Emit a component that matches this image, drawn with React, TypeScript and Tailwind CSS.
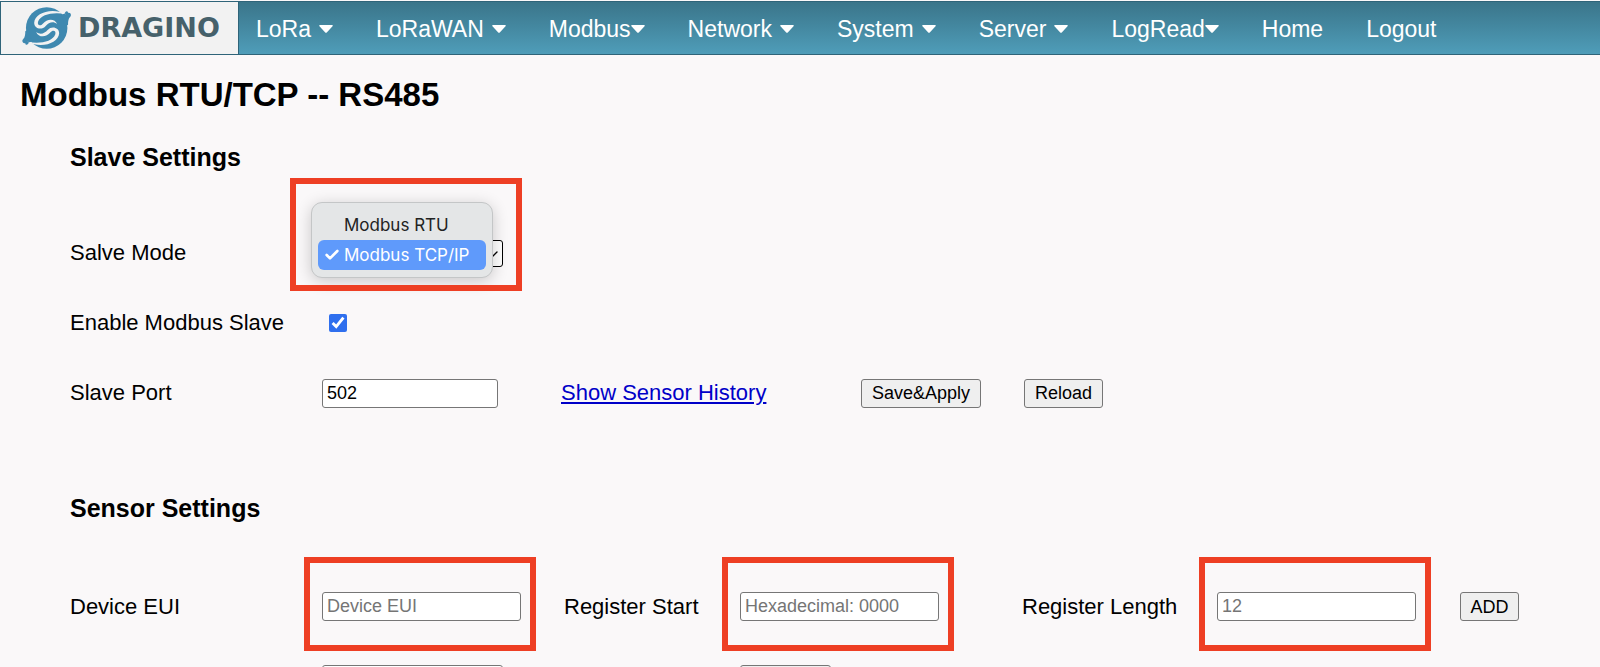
import React from "react";
import { Check, ChevronDown } from "lucide-react";

const menus = [
  { label: "LoRa", caret: "spaced" },
  { label: "LoRaWAN", caret: "spaced" },
  { label: "Modbus", caret: "tight" },
  { label: "Network", caret: "spaced" },
  { label: "System", caret: "spaced" },
  { label: "Server", caret: "spaced" },
  { label: "LogRead", caret: "tight" },
  { label: "Home", caret: "" },
  { label: "Logout", caret: "" },
];

const inputClass =
  "h-[29px] rounded-[3px] border border-[#767676] bg-white px-1 text-[18px] text-black placeholder:text-[#757575]";
const buttonClass =
  "h-[29px] rounded-[3px] border border-[#767676] bg-[#efefef] text-[18px] leading-[26px] text-black";
const sensorGrid =
  "grid grid-cols-[252fr_242fr_176fr_282fr_195fr_243fr_140fr] items-center";

// One arm of the swirl; the other is the same arm turned by half
function SwirlArm() {
  return (
    <>
      <path
        fill="#3f89b0"
        d="M186 42 C192 42 196 39 198 35 C201 31 206 33 206 38 C212 36 217 42 214 48 C210 53 206 56 206 74 L196 80 Z"
      />
      <path
        fill="#f2f2f2"
        d="M200 42 C162 34 124 42 115 64 C111 76 122 80 130 70 C142 55 166 54 173 72 C160 62 147 68 138 78 C126 92 103 86 103 68 C105 38 156 20 200 42 Z"
      />
    </>
  );
}

function Swirl() {
  return (
    <svg viewBox="66 18 152 132" className="h-11 w-[50px]" aria-hidden="true">
      <circle cx="141" cy="84" r="63" fill="#3f89b0" />
      <SwirlArm />
      <g transform="rotate(180 141 84)">
        <SwirlArm />
      </g>
    </svg>
  );
}

function Highlight() {
  return (
    <div className="pointer-events-none absolute -top-[35px] -right-[15px] -bottom-[30px] -left-[18px] border-6 border-[#ee3f24]" />
  );
}

function SensorInput({ id, placeholder }: { id: string; placeholder: string }) {
  return (
    <div className="relative flex w-[199px]">
      <input id={id} placeholder={placeholder} className={`w-full ${inputClass}`} />
      <Highlight />
    </div>
  );
}

function NavBar() {
  return (
    <header className="mt-px flex h-[54px] border-y border-[#2f6479] bg-linear-to-b from-[#3a758a] to-[#4f9db9]">
      <a
        href="#"
        className="flex w-[239px] shrink-0 items-center gap-1.5 border-x border-[#2f6479] bg-[#f2f2f2] pl-[21px] font-['DejaVu_Sans',sans-serif] text-[27px] font-bold text-[#46616b]"
      >
        <Swirl />
        DRAGINO
      </a>
      <nav className="flex items-center gap-[43px] pt-0.5 pl-[17px] text-[23px] text-white">
        {menus.map((menu) => (
          <a key={menu.label} href="#" className="flex items-center whitespace-nowrap">
            {menu.label}
            {menu.caret && (
              <svg
                viewBox="0 0 14 8"
                className={menu.caret === "spaced" ? "ml-2 h-2 w-3.5" : "h-2 w-3.5"}
                fill="currentColor"
                aria-hidden="true"
              >
                <path d="M1 0 H13 Q14.300 0.300 13.500 1.300 L7.800 7.400 Q7 8.200 6.200 7.400 L0.500 1.300 Q-0.300 0.300 1 0 Z" />
              </svg>
            )}
          </a>
        ))}
      </nav>
    </header>
  );
}

function ModeSelect() {
  return (
    <div className="relative flex w-[181px]">
      <select
        id="mode"
        defaultValue="tcp"
        className="h-[27px] w-full appearance-none rounded-[3px] border border-black bg-white px-1 text-[18px]"
      >
        <option value="rtu">Modbus RTU</option>
        <option value="tcp">Modbus TCP/IP</option>
      </select>
      <ChevronDown size={16} strokeWidth={2} className="pointer-events-none absolute top-1.5 right-0.5" />

      {/* Open option list */}
      <ul className="absolute -top-[38px] -left-[11px] w-[182px] rounded-[11px] border border-[#c4c6c7] bg-[#e4e6e7] px-1.5 py-[7px] font-[Inter,sans-serif] text-[17px] leading-[30px] text-[#222] shadow-[0_3px_16px_rgba(0,0,0,0.2)]">
        <li className="pl-[26px] whitespace-nowrap">Modbus RTU</li>
        <li className="flex items-center rounded-md bg-[#5f9afb] pl-1.5 whitespace-nowrap text-white">
          <Check size={16} strokeWidth={4} className="mr-1 shrink-0" />
          Modbus TCP/IP
        </li>
      </ul>
      <div className="pointer-events-none absolute -top-[62px] -right-[19px] -bottom-6 -left-8 border-6 border-[#ee3f24]" />
    </div>
  );
}

export default function App() {
  return (
    <div className="h-screen overflow-hidden bg-[#faf8f9] font-['Liberation_Sans',Arial,sans-serif] text-[22px] leading-7 text-black">
      <NavBar />

      <main>
        <h1 className="pt-5 pl-5 text-[33px] leading-10 font-bold">Modbus RTU/TCP -- RS485</h1>

        <form className="pl-[70px]">
          <h2 className="mt-7 text-[25px] leading-7 font-bold">Slave Settings</h2>

          <div className="mt-[47px] grid grid-cols-[252fr_239fr_300fr_163fr_576fr] auto-rows-[70px] items-center">
            <label htmlFor="mode">Salve Mode</label>
            <div className="col-span-4">
              <ModeSelect />
            </div>

            <label htmlFor="enable" className="whitespace-nowrap">Enable Modbus Slave</label>
            <div className="col-span-4 flex pl-[7px]">
              <input id="enable" type="checkbox" defaultChecked className="size-[18px] accent-[#2f6fee]" />
            </div>

            <label htmlFor="port">Slave Port</label>
            <input id="port" defaultValue="502" className={`w-[176px] ${inputClass}`} />
            <a href="#" className="whitespace-nowrap text-[#0000c8] underline">Show Sensor History</a>
            <button type="button" className={`w-[120px] ${buttonClass}`}>Save&amp;Apply</button>
            <button type="button" className={`w-[79px] ${buttonClass}`}>Reload</button>
          </div>

          <h2 className="mt-[66px] text-[25px] leading-7 font-bold">Sensor Settings</h2>

          <div className={`mt-[70px] ${sensorGrid}`}>
            <label htmlFor="eui">Device EUI</label>
            <SensorInput id="eui" placeholder="Device EUI" />
            <label htmlFor="start">Register Start</label>
            <SensorInput id="start" placeholder="Hexadecimal: 0000" />
            <label htmlFor="length">Register Length</label>
            <SensorInput id="length" placeholder="12" />
            <button type="button" className={`w-[59px] ${buttonClass}`}>ADD</button>
          </div>

          <div className={`mt-11 ${sensorGrid}`}>
            <select aria-label="Device" className={`col-start-2 w-[181px] ${inputClass}`} />
            <button type="button" aria-label="Delete" className={`col-start-4 w-[91px] ${buttonClass}`} />
          </div>
        </form>
      </main>
    </div>
  );
}
